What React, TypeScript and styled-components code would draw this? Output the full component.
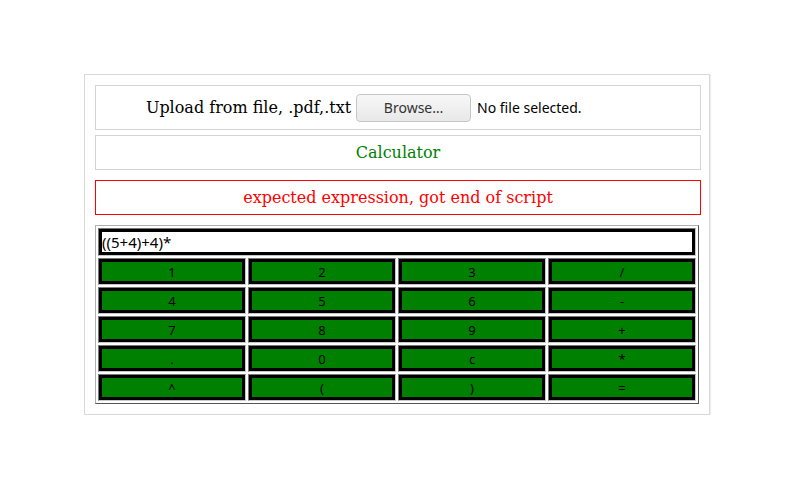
import React, { useState } from "react"
import styled, { createGlobalStyle } from "styled-components"

const GlobalStyle = createGlobalStyle`
    body {
        margin: 8px;
        background: #fff;
        font-family: "DejaVu Serif", serif;
    }
`

const Panel = styled.div`
    width: 604px;
    margin: 66px 0 0 76px;
    padding: 10px;
    border: 1px solid #d8d8d8;
    box-shadow: 1px 1px 1px #eee;
`

const Box = styled.div<{ $danger?: boolean; $tall?: boolean }>`
    width: 100%;
    height: ${p => (p.$tall ? "43px" : "33px")};
    border: 1px solid ${p => (p.$danger ? "#ff0000" : "#d4d4d4")};
    display: flex;
    align-items: center;
    justify-content: center;
    font-size: 16px;
    color: ${p => (p.$danger ? "#ff0000" : "#000")};
`

const Title = styled.span`
    color: #008000;
`

const Label = styled.span`
    margin-right: 5px;
`

const FileInput = styled.div`
    width: 294px;
    display: flex;
    align-items: center;
    font-family: "Noto Sans", sans-serif;
    font-size: 14px;
    color: #000;
`

const Browse = styled.button`
    width: 115px;
    height: 28px;
    border: 1px solid #c6c6c6;
    border-radius: 4px;
    background: linear-gradient(#f7f7f7, #e8e8e8);
    font-family: "Noto Sans", sans-serif;
    font-size: 14px;
    color: #333;
    margin-right: 6px;
    padding: 0;
`

const Table = styled.table`
    width: 100%;
    border: 1px solid;
    border-color: #b0b0b0 #555 #555 #b0b0b0;
    border-spacing: 2px;
    border-collapse: separate;
    table-layout: fixed;
`

const Cell = styled.td`
    padding: 0;
    border: 1px solid;
    border-color: #777 #c8c8c8 #c8c8c8 #777;
`

const Display = styled.input`
    display: block;
    box-sizing: border-box;
    width: 100%;
    height: 26px;
    border: 3px solid #000;
    padding: 0;
    font-family: "Noto Sans", sans-serif;
    font-size: 15px;
    color: #000;
    outline: none;
`

const Key = styled.button`
    display: block;
    box-sizing: border-box;
    width: 100%;
    height: 25px;
    border: 3px solid #000;
    background: #008000;
    color: #000;
    font-family: "Noto Sans", sans-serif;
    font-size: 13px;
    padding: 0;
`

const keys = [
    ["1", "2", "3", "/"],
    ["4", "5", "6", "-"],
    ["7", "8", "9", "+"],
    [".", "0", "c", "*"],
    ["^", "(", ")", "="],
]

export default function App() {
    const [expr, setExpr] = useState("((5+4)+4)*")

    return <>
        <GlobalStyle />
        <Panel>
            <Box $tall>
                <Label>Upload from file, .pdf,.txt</Label>
                <FileInput>
                    <Browse>Browse…</Browse>
                    <span>No file selected.</span>
                </FileInput>
            </Box>
            <Box style={{ marginTop: 5 }}>
                <Title>Calculator</Title>
            </Box>
            <Box $danger style={{ marginTop: 10 }}>
                expected expression, got end of script
            </Box>
            <Table style={{ marginTop: 10 }}>
                <tbody>
                    <tr>
                        <Cell colSpan={4}>
                            <Display value={expr} onChange={e => setExpr(e.target.value)} />
                        </Cell>
                    </tr>
                    {keys.map((row, r) => (
                        <tr key={r}>
                            {row.map(k => (
                                <Cell key={k}>
                                    <Key>{k}</Key>
                                </Cell>
                            ))}
                        </tr>
                    ))}
                </tbody>
            </Table>
        </Panel>
    </>
}
